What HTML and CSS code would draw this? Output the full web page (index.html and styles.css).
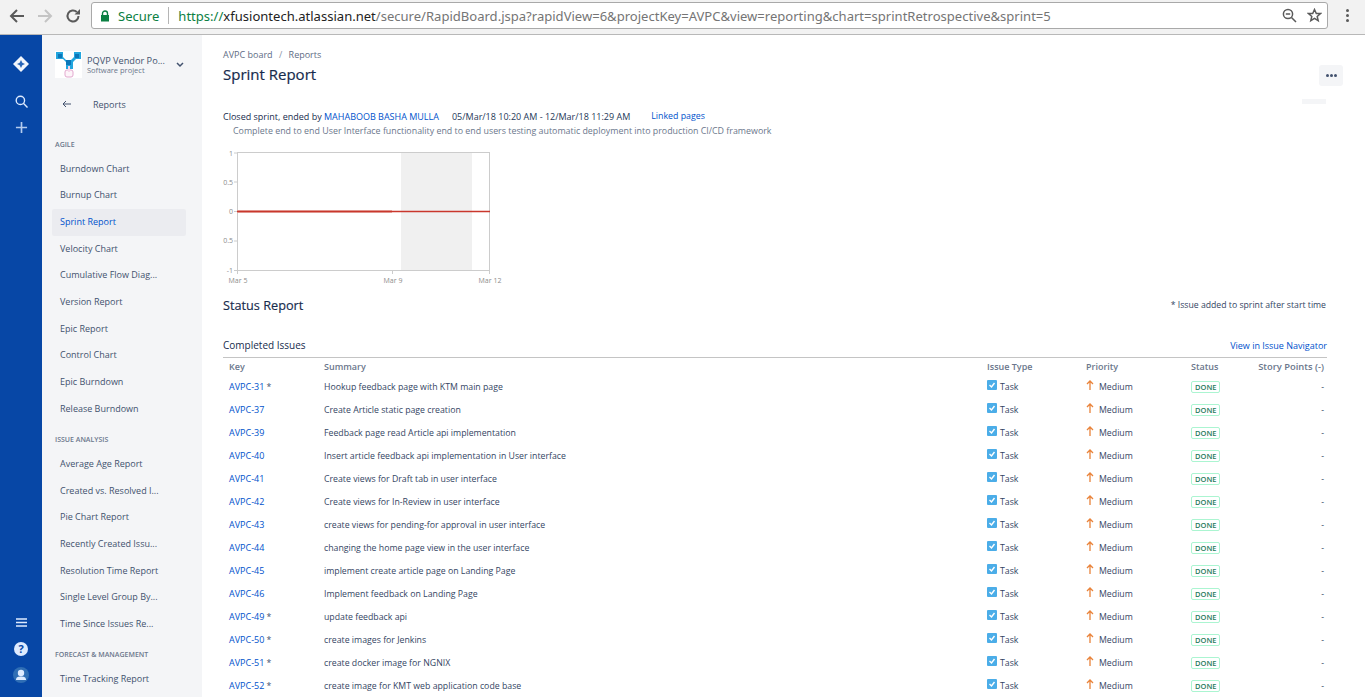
FILE: index.html
```html
<!DOCTYPE html>
<html lang="en">
<head>
    <meta charset="UTF-8">
    <title>Sprint Report</title>
    <link rel="stylesheet" href="styles.css">
</head>
<body>
    <header class="browser">
        <svg class="tool" width="16" height="16" viewBox="0 0 16 16"><path d="M15 8H2M8 2L2 8l6 6" fill="none" stroke="#5a5a5a" stroke-width="2"/></svg>
        <svg class="tool" width="16" height="16" viewBox="0 0 16 16"><path d="M1 8h13M8 2l6 6-6 6" fill="none" stroke="#c4c4c4" stroke-width="2"/></svg>
        <svg class="tool" width="16" height="16" viewBox="0 0 16 16"><path d="M13.500 8A5.500 5.500 0 1 1 11.800 4" fill="none" stroke="#5a5a5a" stroke-width="2"/><path d="M9.500 6.500H15V1z" fill="#5a5a5a"/></svg>
        <div class="omnibox">
            <svg width="10" height="12" viewBox="0 0 10 12"><path d="M2.500 5V3.500a2.500 2.500 0 0 1 5 0V5" fill="none" stroke="#0b8043" stroke-width="1.400"/><rect x="1" y="5" width="8" height="6.500" fill="#0b8043"/></svg>
            <span class="secure">Secure</span>
            <span class="divider"></span>
            <span class="url"><span class="scheme">https://</span>xfusiontech.atlassian.net<span class="path">/secure/RapidBoard.jspa?rapidView=6&amp;projectKey=AVPC&amp;view=reporting&amp;chart=sprintRetrospective&amp;sprint=5</span></span>
            <svg class="zoom-icon" width="15" height="15" viewBox="0 0 15 15"><circle cx="6" cy="6" r="4.600" fill="none" stroke="#5a5a5a" stroke-width="1.500"/><path d="M3.800 6h4.400M9.500 9.500l4.500 4.500" stroke="#5a5a5a" stroke-width="1.500"/></svg>
            <svg width="15" height="15" viewBox="0 0 15 15"><path d="M7.500 1.500l1.800 4h4.200l-3.300 2.900 1 4.300-3.700-2.300-3.700 2.300 1-4.300L1.500 5.500h4.200z" fill="none" stroke="#5a5a5a" stroke-width="1.500"/></svg>
        </div>
        <div class="kebab"><i></i><i></i><i></i></div>
    </header>

    <div class="app">
        <nav class="global">
            <div class="global-top">
                <svg class="g-logo" width="16" height="16" viewBox="0 0 18 18"><path d="M9 0l9 9-9 9-9-9z" fill="#f2f6fc"/><path d="M9 4.500l1.500 3 3 1.500-3 1.500-1.500 3-1.500-3-3-1.500 3-1.500z" fill="#2a66b8"/></svg>
                <svg class="g-search" width="13" height="13" viewBox="0 0 14 14"><circle cx="5.800" cy="5.800" r="4.500" fill="none" stroke="#deebff" stroke-width="1.500"/><path d="M9 9l4.500 4.500" stroke="#deebff" stroke-width="1.500"/></svg>
                <svg class="g-plus" width="13" height="13" viewBox="0 0 14 14"><path d="M7 1v12M1 7h12" stroke="#b3cbee" stroke-width="1.800"/></svg>
            </div>
            <div class="global-bottom">
                <svg width="11" height="9" viewBox="0 0 11 9"><path d="M0 1h11M0 4.500h11M0 8h11" stroke="#deebff" stroke-width="1.300"/></svg>
                <svg class="g-help" width="14" height="14" viewBox="0 0 14 14"><circle cx="7" cy="7" r="7" fill="#deebff"/><text x="7" y="11" class="help-mark">?</text></svg>
                <svg class="g-user" width="16" height="16" viewBox="0 0 16 16"><circle cx="8" cy="8" r="8" fill="#2f6eb5"/><circle cx="8" cy="6" r="3.200" fill="#deebff"/><path d="M3 13c0-3 2-3.500 5-3.500s5 .5 5 3.500z" fill="#deebff"/></svg>
            </div>
        </nav>

        <aside class="sidebar">
            <div class="project">
                <svg class="logo" width="27" height="27" viewBox="0 0 27 27">
                    <rect width="27" height="27" fill="#fff"/>
                    <path d="M1 1l7 0 0 5 3 3h5l3-3 0-5 7 0 0 7-5 0-3 3v7h-7v-7l-3-3-7 0z" fill="#22a5de"/>
                    <path d="M3 3h4v4H3zM20 3h4v4h-4zM11 9h5v5h-5z" fill="#0d76b8"/>
                    <rect x="10" y="19" width="8" height="7" rx="2" fill="#fdf4f9" stroke="#e3a9cf"/>
                    <path d="M13 15h2v6h-2z" fill="#f7d6ea"/>
                </svg>
                <div class="project-text">
                    <div class="project-name">PQVP Vendor Po...</div>
                    <div class="project-type">Software project</div>
                </div>
                <svg width="8" height="6" viewBox="0 0 8 6"><path d="M1 1l3 3 3-3" fill="none" stroke="#42526e" stroke-width="1.500"/></svg>
            </div>
            <div class="back">
                <svg width="9" height="8" viewBox="0 0 9 8"><path d="M9 4H1M4 1L1 4l3 3" fill="none" stroke="#42526e" stroke-width="1"/></svg>
                <span>Reports</span>
            </div>
            <div class="nav-heading first">AGILE</div>
            <a class="nav-item">Burndown Chart</a>
            <a class="nav-item">Burnup Chart</a>
            <a class="nav-item active">Sprint Report</a>
            <a class="nav-item">Velocity Chart</a>
            <a class="nav-item">Cumulative Flow Diag...</a>
            <a class="nav-item">Version Report</a>
            <a class="nav-item">Epic Report</a>
            <a class="nav-item">Control Chart</a>
            <a class="nav-item">Epic Burndown</a>
            <a class="nav-item">Release Burndown</a>
            <div class="nav-heading">ISSUE ANALYSIS</div>
            <a class="nav-item">Average Age Report</a>
            <a class="nav-item">Created vs. Resolved I...</a>
            <a class="nav-item">Pie Chart Report</a>
            <a class="nav-item">Recently Created Issu...</a>
            <a class="nav-item">Resolution Time Report</a>
            <a class="nav-item">Single Level Group By...</a>
            <a class="nav-item">Time Since Issues Re...</a>
            <div class="nav-heading">FORECAST &amp; MANAGEMENT</div>
            <a class="nav-item">Time Tracking Report</a>
        </aside>

        <main class="content">
            <div class="breadcrumbs">AVPC board <span class="sep">/</span> Reports</div>
            <div class="title-row">
                <h1>Sprint Report</h1>
                <div class="more"><i></i><i></i><i></i></div>
            </div>
            <div class="stub-row"><span class="stub"></span></div>
            <div class="sprint-meta">
                <span>Closed sprint, ended by <a>MAHABOOB BASHA MULLA</a></span>
                <span class="dates">05/Mar/18 10:20 AM - 12/Mar/18 11:29 AM</span>
                <a class="linked">Linked pages</a>
            </div>
            <div class="sprint-goal">Complete end to end User Interface functionality end to end users testing automatic deployment into production CI/CD framework</div>

            <svg class="chart" width="290" height="139" viewBox="0 -3 290 139">
                <rect x="179" y="1" width="71" height="118" fill="#f0f0f0"/>
                <rect x="15.500" y="0.500" width="252" height="118" fill="none" stroke="#ccc"/>
                <path d="M15 59.500h155" stroke="#e8b4ae" stroke-width="3"/>
                <path d="M15 59.500h253" stroke="#c9372c" stroke-width="1.600"/>
                <path d="M12 1h3M12 30h3M12 59.500h3M12 89h3M12 118.500h3M15.500 119v3M170.500 119v3M267.500 119v3" stroke="#ccc"/>
                <g class="tick-y">
                    <text x="11" y="4">1</text>
                    <text x="11" y="33">0.5</text>
                    <text x="11" y="62">0</text>
                    <text x="11" y="91">0.5</text>
                    <text x="11" y="121">-1</text>
                </g>
                <g class="tick-x">
                    <text x="16" y="131">Mar 5</text>
                    <text x="171" y="131">Mar 9</text>
                    <text x="268" y="131">Mar 12</text>
                </g>
            </svg>

            <div class="status-row">
                <h2>Status Report</h2>
                <span class="note">* Issue added to sprint after start time</span>
            </div>
            <div class="issues-head">
                <h3>Completed Issues</h3>
                <a>View in Issue Navigator</a>
            </div>
            <table class="issues">
                <thead>
                    <tr><th class="c-key">Key</th><th class="c-sum">Summary</th><th class="c-type">Issue Type</th><th class="c-pri">Priority</th><th class="c-status">Status</th><th class="c-pts">Story Points (-)</th></tr>
                </thead>
                <tbody id="rows"></tbody>
            </table>
        </main>
    </div>
    <script src="rows.js"></script>
</body>
</html>
```

FILE: rows.js
```js
const issues = [
    ["AVPC-31", true, "Hookup feedback page with KTM main page"],
    ["AVPC-37", false, "Create Article static page creation"],
    ["AVPC-39", false, "Feedback page read Article api implementation"],
    ["AVPC-40", false, "Insert article feedback api implementation in User interface"],
    ["AVPC-41", false, "Create views for Draft tab in user interface"],
    ["AVPC-42", false, "Create views for In-Review in user interface"],
    ["AVPC-43", false, "create views for pending-for approval in user interface"],
    ["AVPC-44", false, "changing the home page view in the user interface"],
    ["AVPC-45", false, "implement create article page on Landing Page"],
    ["AVPC-46", false, "Implement feedback on Landing Page"],
    ["AVPC-49", true, "update feedback api"],
    ["AVPC-50", true, "create images for Jenkins"],
    ["AVPC-51", true, "create docker image for NGNIX"],
    ["AVPC-52", true, "create image for KMT web application code base"]
];
const taskIcon = '<svg class="ico task" width="10" height="10" viewBox="0 0 10 10"><rect width="10" height="10" rx="1" fill="#4bade8"/><path d="M2.500 5l2 2 3-4" fill="none" stroke="#fff" stroke-width="1.400"/></svg>';
const arrowIcon = '<svg class="ico arrow" width="8" height="10" viewBox="0 0 8 10"><path d="M4 10V1M1 4l3-3 3 3" fill="none" stroke="#e9833a" stroke-width="1.300"/></svg>';
document.getElementById("rows").innerHTML = issues.map(([key, added, summary]) => `
    <tr>
        <td><a>${key}</a>${added ? ' <span class="star">*</span>' : ""}</td>
        <td>${summary}</td>
        <td>${taskIcon}Task</td>
        <td>${arrowIcon}Medium</td>
        <td><span class="lozenge">DONE</span></td>
        <td class="pts">-</td>
    </tr>`).join("");
```

FILE: styles.css
```css
html, body {
    margin: 0;
    height: 697px;
    overflow: hidden;
}
body {
    font-family: "Open Sans", "Noto Sans", sans-serif;
    font-size: 9px;
    color: #172b4d;
    background: #fff;
}
a {
    color: #0052cc;
}

/* browser toolbar */
.browser {
    height: 35px;
    box-sizing: border-box;
    background: #f2f2f2;
    border-bottom: 1px solid #b8b8b8;
    display: flex;
    align-items: center;
    padding: 0 9px 3px;
    gap: 12px;
}
.omnibox {
    flex: 1;
    height: 27px;
    box-sizing: border-box;
    margin-left: -2px;
    background: #fff;
    border: 1px solid #a9a9a9;
    border-radius: 3px;
    display: flex;
    align-items: center;
    padding: 0 5px 0 8px;
    font-family: "Noto Sans", sans-serif;
    font-size: 13.050px;
}
.secure {
    color: #0b8043;
    margin-left: 8px;
}
.divider {
    width: 1px;
    height: 17px;
    background: #b5b5b5;
    margin: 0 9px;
}
.url {
    flex: 1;
    color: #222;
    white-space: nowrap;
    overflow: hidden;
}
.scheme {
    color: #0b8043;
}
.path {
    color: #757575;
}
.zoom-icon {
    margin-right: 10px;
}
.kebab {
    display: flex;
    flex-direction: column;
    gap: 2px;
    padding: 0 7px 0 6px;
}
.kebab i {
    width: 3px;
    height: 3px;
    border-radius: 50%;
    background: #5a5a5a;
}

.app {
    display: flex;
    height: 662px;
}

/* global blue bar */
.global {
    width: 42px;
    background: #0747a6;
    display: flex;
    flex-direction: column;
    justify-content: space-between;
    align-items: center;
    overflow: hidden;
    flex: none;
}
.global-top {
    display: flex;
    flex-direction: column;
    align-items: center;
    padding-top: 21px;
}
.g-search {
    margin-top: 23px;
}
.g-plus {
    margin-top: 13px;
}
.global-bottom {
    display: flex;
    flex-direction: column;
    align-items: center;
    margin-bottom: 14px;
}
.g-help {
    margin-top: 15px;
}
.g-user {
    margin-top: 11px;
}
.help-mark {
    font-size: 11px;
    font-weight: 700;
    text-anchor: middle;
    fill: #0747a6;
}

/* project sidebar */
.sidebar {
    width: 160px;
    flex: none;
    background: #f4f5f7;
    box-sizing: border-box;
    padding: 16px 16px 0 10px;
    overflow: hidden;
    color: #42526e;
}
.project {
    display: flex;
    align-items: center;
    margin-left: 3px;
    height: 27px;
}
.logo {
    flex: none;
    margin-right: 5px;
}
.project-text {
    width: 89px;
}
.project-name {
    font-size: 9.200px;
    line-height: 11px;
    white-space: nowrap;
}
.project-type {
    font-size: 7.500px;
    line-height: 9px;
    color: #6b778c;
}
.back {
    display: flex;
    align-items: center;
    height: 14px;
    margin: 19px 0 0 10px;
    font-size: 9px;
}
.back span {
    margin-left: 22px;
}
.nav-heading {
    font-size: 7px;
    font-weight: 600;
    color: #6b778c;
    height: 19px;
    line-height: 16px;
    margin: 9.500px 0 0 3px;
    white-space: nowrap;
}
.nav-heading.first {
    margin-top: 25.500px;
}
.nav-item {
    display: block;
    height: 26.700px;
    line-height: 26.700px;
    padding-left: 8px;
    border-radius: 2px;
    color: #42526e;
    white-space: nowrap;
}
.nav-item.active {
    background: #ebecf0;
    color: #0052cc;
}

/* main column */
.content {
    flex: 1;
    min-width: 0;
    box-sizing: border-box;
    padding: 13px 38px 0 21px;
    overflow: hidden;
}
.breadcrumbs {
    color: #5e6c84;
    height: 14px;
    line-height: 13px;
}
.sep {
    margin: 0 4px;
    color: #8993a4;
}
.title-row {
    display: flex;
    justify-content: space-between;
    align-items: flex-start;
    height: 35px;
}
h1 {
    margin: 0;
    font-size: 15px;
    font-weight: 400;
    line-height: 24px;
    -webkit-text-stroke: 0.200px #172b4d;
}
.more {
    width: 24px;
    height: 21px;
    margin: 3px -16px 0 0;
    background: #f4f5f7;
    border-radius: 3px;
    display: flex;
    align-items: center;
    justify-content: center;
    gap: 1px;
}
.more i {
    width: 3px;
    height: 3px;
    border-radius: 50%;
    background: #42526e;
}
.stub-row {
    display: flex;
    justify-content: flex-end;
    height: 5px;
    padding: 2px 1px 0 0;
}
.stub {
    width: 24px;
    height: 5px;
    background: #f4f5f7;
}
.sprint-meta {
    display: flex;
    height: 13px;
    line-height: 13px;
    margin-top: 6px;
}
.dates {
    margin-left: 13px;
    color: #253858;
}
.linked {
    margin-left: 21px;
    font-size: 8.800px;
}
.sprint-goal {
    height: 13px;
    line-height: 13px;
    margin: 2px 0 0 10px;
    color: #6b778c;
    font-size: 8.870px;
}
.chart {
    display: block;
    margin: 11px 0 0 -1px;
}
.tick-y text {
    font-size: 7px;
    fill: #8c8c8c;
    text-anchor: end;
}
.tick-x text {
    font-size: 7px;
    fill: #8c8c8c;
    text-anchor: middle;
}

.status-row {
    display: flex;
    justify-content: space-between;
    align-items: center;
    height: 20px;
    margin-top: 7px;
}
h2 {
    margin: 0;
    font-size: 12.700px;
    font-weight: 400;
    -webkit-text-stroke: 0.150px #172b4d;
}
.note {
    font-size: 8.700px;
    color: #344563;
    margin-right: 1px;
}
.issues-head {
    display: flex;
    justify-content: space-between;
    align-items: center;
    height: 14px;
    margin-top: 23px;
    padding-bottom: 5px;
    border-bottom: 1px solid #c4c4c4;
}
h3 {
    margin: 0;
    font-size: 10px;
    font-weight: 400;
}

/* issues table */
.issues {
    width: 100%;
    border-collapse: collapse;
    table-layout: fixed;
}
.issues th {
    height: 17px;
    padding: 0 6px;
    text-align: left;
    font-weight: 600;
    color: #6b778c;
}
.issues td {
    height: 23px;
    padding: 0 6px;
    white-space: nowrap;
    color: #344563;
    font-size: 8.750px;
}
.c-key {
    width: 83px;
}
.c-sum {
    width: 651px;
}
.c-type {
    width: 87px;
}
.c-pri {
    width: 93px;
}
.c-status {
    width: 55px;
}
.issues .c-pts {
    text-align: right;
    padding-right: 3px;
    font-size: 9.400px;
}
.issues .pts {
    text-align: right;
    padding-right: 3px;
}
.issues td a {
    font-size: 9px;
}
.star {
    color: #42526e;
}
.ico {
    vertical-align: 0;
}
.task {
    margin-right: 3px;
}
.arrow {
    margin-right: 5px;
}
.lozenge {
    display: inline-block;
    font-size: 7.500px;
    font-weight: 600;
    line-height: 10px;
    padding: 0 3px;
    border: 1px solid #abf5d1;
    border-radius: 2px;
    color: #1f7a5c;
}
```
